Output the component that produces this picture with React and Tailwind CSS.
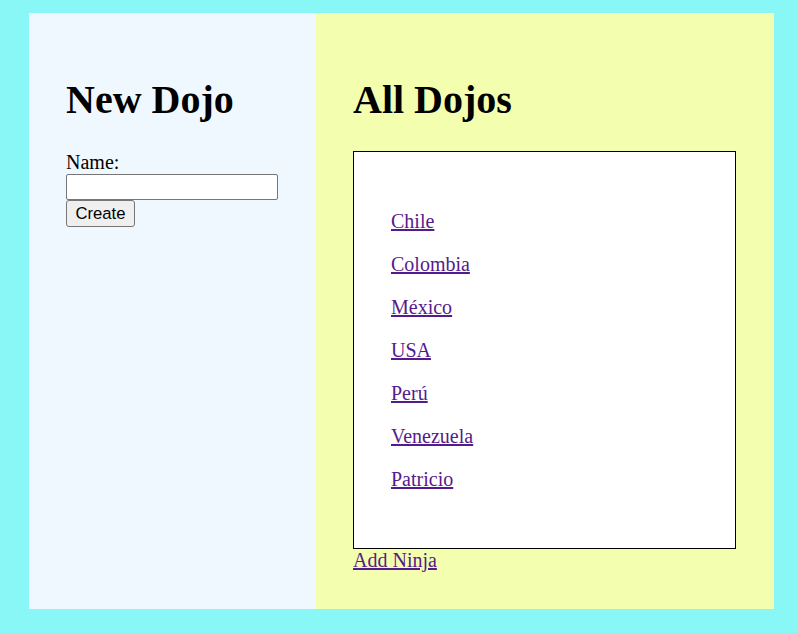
import React, { useState } from 'react'

const dojos = ['Chile', 'Colombia', 'México', 'USA', 'Perú', 'Venezuela', 'Patricio']

function NewDojo() {
  const [name, setName] = useState('')

  return (
    <div className="w-[287px] shrink-0 bg-[#f0f8ff] pt-[37px] pl-[37px]">
      <h1 className="mt-[27px] mb-[28px] text-[40px] font-bold leading-[46px]">New Dojo</h1>
      <form onSubmit={(e) => e.preventDefault()}>
        <label className="block text-[20px] leading-[23px]">Name:</label>
        <input
          value={name}
          onChange={(e) => setName(e.target.value)}
          className="block h-[26px] w-[212px] rounded-[2px] border border-[#767676] bg-white px-[2px] font-['Liberation_Sans',sans-serif] text-[16.67px]"
        />
        <button
          type="submit"
          className="block h-[27px] w-[69px] rounded-[3px] border border-[#767676] bg-[#efefef] font-['Liberation_Sans',sans-serif] text-[16.67px] leading-[20px] text-black"
        >
          Create
        </button>
      </form>
    </div>
  )
}

function AllDojos() {
  return (
    <div className="flex-1 bg-[#f3ffaf] pt-[37px] pl-[37px] pr-[38px]">
      <h1 className="mt-[27px] mb-[28px] text-[40px] font-bold leading-[46px]">All Dojos</h1>
      <div className="border border-black bg-white p-[37px]">
        <ul className="mt-[21px] mb-[20px]">
          {dojos.map((d) => (
            <li key={d} className="mb-[20px] last:mb-0 text-[20px] leading-[23px]">
              <a href="#" className="text-[#551a8b] underline">{d}</a>
            </li>
          ))}
        </ul>
      </div>
      <a href="#" className="block w-fit text-[20px] leading-[23px] text-[#551a8b] underline">Add Ninja</a>
    </div>
  )
}

export default function App() {
  return (
    <div className="min-h-screen bg-[#8af7f7] pt-[13px] pl-[29px] font-['Liberation_Serif',serif] text-black">
      <div className="flex h-[596px] w-[745px]">
        <NewDojo />
        <AllDojos />
      </div>
    </div>
  )
}
